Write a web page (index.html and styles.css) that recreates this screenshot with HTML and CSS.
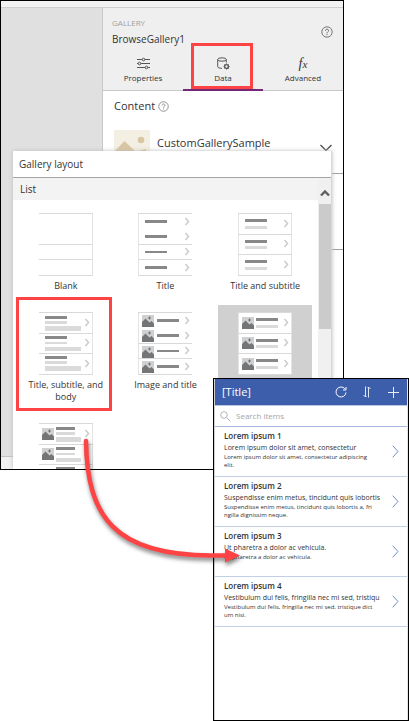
FILE: index.html
```html
<!DOCTYPE html>
<html lang="en">
<head>
<meta charset="utf-8">
<meta name="viewport" content="width=device-width, initial-scale=1">
<title>BrowseGallery1</title>
<link rel="stylesheet" href="styles.css">
</head>
<body>
<svg class="defs" aria-hidden="true">
  <defs>
    <path id="chev" d="M0.500 0 L3.500 3.500 L0.500 7" fill="none" stroke="#cdcdcd" stroke-width="1.600"/>
    <g id="pic">
      <rect width="12" height="12" fill="#cfd0d1"/>
      <path d="M0 12V7L3.500 3.500L7.500 7.500L9.500 6L12 8.500V12Z" fill="#737577"/>
      <path d="M7.500 1.500V4.500M6 3H9" stroke="#737577" stroke-width="1"/>
    </g>
    <path id="rows3" d="M0 .5H54M0 21.500H54M0 41.500H54M0 62.500H54" stroke="#d9d9d9" fill="none"/>
    <path id="rows4" d="M0 .5H54M0 31.500H54M0 46.500H54M0 62.500H54" stroke="#d9d9d9" fill="none"/>
    <g id="chev3"><use href="#chev" x="46" y="7"/><use href="#chev" x="46" y="27"/><use href="#chev" x="46" y="48"/></g>
    <g id="chev4"><use href="#chev" x="47" y="5"/><use href="#chev" x="47" y="20"/><use href="#chev" x="47" y="35"/><use href="#chev" x="47" y="51"/></g>
  </defs>
</svg>
<div class="page">
  <div class="studio">
    <div class="ribbon"></div>
    <div class="workspace">
      <div class="canvas"><div class="canvas-foot"></div></div>
      <section class="panel">
        <header class="panel-head">
          <div>
            <div class="kind">GALLERY</div>
            <div class="name">BrowseGallery1</div>
          </div>
          <button class="icon-btn" aria-label="Help"><svg width="12" height="12" viewBox="0 0 12 12" fill="none" stroke="#6a6a6a"><circle cx="6" cy="6" r="5.200" stroke-width=".9"/><path d="M4.400 4.800C4.400 2.700 7.600 2.700 7.600 4.700C7.600 5.800 6 5.900 6 7.300M6 8.200V9.200"/></svg></button>
        </header>
        <nav class="tabs">
          <button class="tab"><svg width="13" height="13" viewBox="0 0 13 13" fill="#efefef" stroke="#555"><path d="M0 2.500H13M0 6.500H13M0 10.500H13"/><circle cx="6.500" cy="2.500" r="1.300"/><circle cx="2.500" cy="6.500" r="1.300"/><circle cx="9.500" cy="10.500" r="1.300"/></svg>Properties</button>
          <button class="tab active"><svg width="13" height="13" viewBox="0 0 13 13" fill="none" stroke="#555"><ellipse cx="5" cy="2.500" rx="4.300" ry="1.700"/><path d="M.7 2.500V9.500C.7 10.800 2.500 11.300 5 11.300M9.300 2.500V5.500"/><circle cx="9.500" cy="9.500" r="1.900" stroke-width="1.400"/><path stroke-width=".8" d="M9.500 6.300V7.500M9.500 11.500V12.700M6.500 9.500H7.500M11.500 9.500H12.700M7.300 7.300L8.100 8.100M11.700 7.300L10.900 8.100M7.300 11.700L8.100 10.900M11.700 11.700L10.900 10.900"/></svg>Data<span class="callout tab-callout"></span></button>
          <button class="tab"><span class="fx"><i>f</i><i class="fx-x">x</i></span>Advanced</button>
        </nav>
        <div class="panel-body">
          <div class="content-label">Content <svg width="11" height="11" viewBox="0 0 12 12" fill="none" stroke="#8a8a8a"><circle cx="6" cy="6" r="5.200"/><path d="M4.400 4.800C4.400 2.700 7.600 2.700 7.600 4.700C7.600 5.800 6 5.900 6 7.300M6 8.200V9.200"/></svg></div>
          <div class="source">
            <svg width="36" height="36" viewBox="0 0 36 36"><rect width="36" height="36" fill="#f4efe3"/><path d="M0 22L10.500 11L22 22L31 19L36 24V36H0Z" fill="#d9c7a3"/><circle cx="27" cy="10" r="3.300" fill="#d9c7a3"/></svg>
            <span class="source-name">CustomGallerySample</span>
            <button class="icon-btn" aria-label="Expand"><svg width="12" height="8" viewBox="0 0 12 8" fill="none" stroke="#444" stroke-width="1.200"><path d="M.5 1L6 6.500L11.500 1"/></svg></button>
          </div>
          <div class="field"></div>
        </div>
      </section>
    </div>

    <section class="popup">
      <h2 class="popup-title">Gallery layout</h2>
      <div class="popup-body">
        <div class="popup-main">
          <div class="group">List</div>
          <div class="layouts">
            <button class="layout"><svg width="54" height="63" viewBox="0 0 54 63"><path d="M53.500 0V63" stroke="#e4e4e4"/><use href="#rows4"/></svg>Blank</button>
            <button class="layout"><svg width="54" height="63" viewBox="0 0 54 63"><path d="M.5 0V63" stroke="#e4e4e4"/><use href="#rows4"/><path d="M7 8.500H29M7 23.500H29M7 54.500H29" stroke="#888" stroke-width="3"/><path d="M7 39H29" stroke="#888" stroke-width="2"/><use href="#chev4"/></svg>Title</button>
            <button class="layout"><svg width="54" height="63" viewBox="0 0 54 63"><path d="M.5 0V63M53.500 0V63" stroke="#e4e4e4"/><use href="#rows3"/><path d="M7 7.500H29M7 28.500H29M7 48.500H29" stroke="#888" stroke-width="3"/><path d="M7 14.500H29M7 34.500H29M7 55.500H29" stroke="#dadada" stroke-width="3"/><use href="#chev3"/></svg>Title and subtitle</button>
            <button class="layout"><svg width="54" height="63" viewBox="0 0 54 63"><path d="M53.500 0V63" stroke="#e4e4e4"/><use href="#rows3"/><path d="M6 5.500H28M6 25.500H28M6 45.500H28" stroke="#888" stroke-width="3"/><path d="M6 10.500H28M6 50.500H28" stroke="#dadada" stroke-width="3"/><path d="M6 31H28" stroke="#dadada" stroke-width="2"/><path d="M6 16.500H42M6 56.500H42" stroke="#dadada" stroke-width="5"/><path d="M6 37H42" stroke="#dadada" stroke-width="4"/><use href="#chev3"/></svg>Title, subtitle, and body<span class="callout layout-callout"></span></button>
            <button class="layout"><svg width="54" height="63" viewBox="0 0 54 63"><path d="M.5 0V63" stroke="#e4e4e4"/><use href="#rows4"/><use href="#pic" x="4" y="3"/><use href="#pic" x="4" y="18"/><use href="#pic" x="4" y="34"/><use href="#pic" x="4" y="49"/><path d="M19 8.500H41M19 23.500H41M19 54.500H41" stroke="#888" stroke-width="3"/><path d="M19 39H41" stroke="#888" stroke-width="2"/><use href="#chev4"/></svg>Image and title</button>
            <button class="layout selected" aria-pressed="true"><svg width="54" height="63" viewBox="0 0 54 63"><rect width="54" height="63" fill="#fff"/><path d="M.5 0V63M53.500 0V63" stroke="#e4e4e4"/><use href="#rows3"/><use href="#pic" x="4" y="5"/><use href="#pic" x="4" y="25"/><use href="#pic" x="4" y="46"/><path d="M18 7.500H40M18 28.500H40M18 48.500H40" stroke="#888" stroke-width="3"/><path d="M18 14.500H40M18 34.500H40M18 55.500H40" stroke="#dadada" stroke-width="3"/><use href="#chev3"/></svg></button>
            <button class="layout"><svg width="54" height="63" viewBox="0 0 54 63"><path d="M53.500 0V63" stroke="#e4e4e4"/><use href="#rows3"/><use href="#pic" x="3" y="5"/><use href="#pic" x="3" y="25"/><path d="M17 5.500H36M17 25.500H36M17 45.500H36" stroke="#888" stroke-width="3"/><path d="M17 10.500H36" stroke="#dadada" stroke-width="3"/><path d="M17 31H36" stroke="#dadada" stroke-width="2"/><path d="M17 16.500H42" stroke="#dadada" stroke-width="5"/><path d="M17 37H42" stroke="#dadada" stroke-width="4"/><use href="#chev" x="46" y="7"/></svg></button>
          </div>
        </div>
        <div class="scroll">
          <svg width="12" height="26" viewBox="0 0 12 26"><path d="M2 17.500L6 13.500L10 17.500" fill="none" stroke="#606060" stroke-width="2.400"/></svg>
          <div class="scroll-thumb"></div>
        </div>
      </div>
    </section>
  </div>

  <main class="phone">
    <header class="app-bar">
      <h1>[Title]</h1>
      <button class="icon-btn" aria-label="Refresh"><svg width="12" height="12" viewBox="0 0 12 12" fill="none" stroke="#fff"><path d="M11 6.500A5 5 0 1 1 9.800 2.700M11 1V4H8"/></svg></button>
      <button class="icon-btn" aria-label="Sort"><svg width="12" height="12" viewBox="0 0 12 12" fill="none" stroke="#dfe6f5"><path d="M4.500 .5V11M2.500 9L4.500 11L5.500 10M7.500 11.500V1M6.500 2L7.500 1L9.500 3"/></svg></button>
      <button class="icon-btn" aria-label="Add"><svg width="12" height="12" viewBox="0 0 12 12" fill="none" stroke="#e8edf8"><path d="M6.500 1V12M1 6.500H12"/></svg></button>
    </header>
    <label class="search">
      <svg width="11" height="11" viewBox="0 0 11 11" fill="none" stroke="#b5b5b5"><circle cx="4" cy="4" r="3.300"/><path d="M6.500 6.500L10.500 10.500"/></svg>
      <input type="text" placeholder="Search items" aria-label="Search items">
    </label>
    <ul class="items">
      <li><div class="text"><h3>Lorem ipsum 1</h3><p class="sub">Lorem ipsum dolor sit amet, consectetur</p><p class="body">Lorem ipsum dolor sit amet, consectetur adipiscing<br>elit.</p></div><svg class="next" width="7" height="13" viewBox="0 0 7 13"><path d="M.7 .7L6 6.500L.7 12.300"/></svg></li>
      <li><div class="text"><h3>Lorem ipsum 2</h3><p class="sub">Suspendisse enim metus, tincidunt quis lobortis</p><p class="body">Suspendisse enim metus, tincidunt quis lobortis a, fri<br>ngilla dignissim neque.</p></div><svg class="next" width="7" height="13" viewBox="0 0 7 13"><path d="M.7 .7L6 6.500L.7 12.300"/></svg></li>
      <li><div class="text"><h3>Lorem ipsum 3</h3><p class="sub">Ut pharetra a dolor ac vehicula.</p><p class="body">Ut pharetra a dolor ac vehicula.</p></div><svg class="next" width="7" height="13" viewBox="0 0 7 13"><path d="M.7 .7L6 6.500L.7 12.300"/></svg></li>
      <li><div class="text"><h3>Lorem ipsum 4</h3><p class="sub">Vestibulum dui felis, fringilla nec mi sed, tristiqu</p><p class="body">Vestibulum dui felis, fringilla nec mi sed, tristique dict<br>um nisi.</p></div><svg class="next" width="7" height="13" viewBox="0 0 7 13"><path d="M.7 .7L6 6.500L.7 12.300"/></svg></li>
    </ul>
  </main>

  <svg class="arrow" width="180" height="150" viewBox="70 430 180 150" aria-hidden="true"><path d="M86 441C87 515 113 556 213 555.500H226" fill="none" stroke="#fd4343" stroke-width="4.500" stroke-linecap="round"/><path d="M225 548.500L240 555.500L225 562.500Z" fill="#fd4343"/></svg>
</div>
</body>
</html>
```
FILE: styles.css
```css
* { box-sizing: border-box; }
body { margin: 0; background: #fff; color: #333; font-family: "Open Sans", "Noto Sans", sans-serif; }
h1, h2, h3, p, ul { margin: 0; padding: 0; font-weight: 400; }
button { margin: 0; padding: 0; border: 0; background: none; color: inherit; font: inherit; }
svg { display: block; flex: none; }
.defs { position: absolute; width: 0; height: 0; }
.page { position: relative; min-height: 100vh; overflow: hidden; }
.icon-btn { display: flex; }

.studio { position: relative; display: flex; flex-direction: column; height: calc(100vh - 251px); margin-right: 65px; border: 1px solid #000; overflow: hidden; }
.ribbon { height: 7px; background: #f3f2f3; border-bottom: 1px solid #cfcfcf; }
.workspace { display: flex; flex: 1; }
.canvas { flex: 1; display: flex; align-items: flex-end; background: #e0e0e0; border-right: 1px solid #c8c8c8; }
.canvas-foot { flex: 1; height: 13px; background: #f1f1f1; border-top: 1px solid #c4c4c4; }
.panel { width: 240px; background: #fff; }
.panel-head { display: flex; justify-content: space-between; align-items: center; height: 42px; padding: 6px 10px 0 9px; background: #efefef; }
.kind { font-size: 8px; line-height: 16px; color: #a0a0a0; }
.name { font-size: 10px; line-height: 16px; padding-bottom: 2px; }
.tabs { display: flex; height: 41px; background: #efefef; border-bottom: 1px solid #c9c9c9; }
.tab { position: relative; flex: 1; display: flex; flex-direction: column; align-items: center; gap: 2px; padding-top: 7px; font-size: 8px; line-height: 12px; height: 41px; }
.tab.active { border-bottom: 2px solid #742774; }
.fx { height: 13px; font: 14px/13px "Liberation Serif", serif; }
.fx-x { font-size: 11px; }
.callout { position: absolute; border: 3px solid #fd4343; pointer-events: none; }
.tab-callout { inset: -7px 10px 0 8px; }
.panel-body { padding: 7px 11px; }
.content-label { display: flex; align-items: center; gap: 3px; font-size: 11px; line-height: 16px; }
.source { display: flex; align-items: center; gap: 7px; margin-top: 16px; }
.source-name { flex: 1; align-self: flex-start; font-size: 11px; line-height: 26px; }
.field { height: 77px; margin: 7px -11px 0; border-top: 1px solid #a0a0a0; border-bottom: 1px solid #a0a0a0; }

.popup { position: absolute; inset: 150px 11px 0 12px; display: flex; flex-direction: column; background: #fff; border-right: 1px solid #d8d8d8; box-shadow: 0 0 4px #bbb; }
.popup-title { height: 27px; padding-left: 6px; border-bottom: 1px solid #a5a5a5; font-size: 10px; line-height: 27px; }
.popup-body { flex: 1; display: flex; min-height: 0; }
.popup-main { flex: 1; overflow: hidden; }
.group { height: 22px; padding-left: 7px; background: #f3f3f3; font-size: 10px; line-height: 22px; }
.layouts { display: grid; grid-template-columns: repeat(3, 1fr); gap: 13px 6px; padding: 6px; }
.layout { position: relative; display: flex; flex-direction: column; align-items: center; gap: 4px; padding: 7px 8px 0; font-size: 9px; line-height: 12px; }
.layout.selected { background: #d0d0d0; }
.layout-callout { inset: -8px 1px -8px -3px; }
.scroll { width: 13px; padding-left: 1px; background: #f0f0f0; }
.scroll-thumb { height: 125px; background: #cbcbcb; }

.phone { position: absolute; inset: 378px 0 0 213px; padding: 0 1px; background: #fff; border: 1px solid #000; box-shadow: inset 1px 0 #d0d0d0, inset -1px 0 #e4e4e4; }
.app-bar { display: flex; align-items: center; gap: 14px; height: 27px; padding: 0 8px 0 7px; background: #3d5eab; border-bottom: 1px solid #b9c6e2; color: #fff; }
.app-bar h1 { flex: 1; font-size: 11px; line-height: 26px; }
.search { display: flex; align-items: center; gap: 5px; height: 21px; padding: 0 5px; border-bottom: 1px solid #a6b9de; }
.search input { flex: 1; min-width: 0; padding: 0; border: 0; outline: 0; background: none; font: 8px/16px "Open Sans", sans-serif; }
.search input::placeholder { color: #a5a5a5; }
.items { list-style: none; }
.items li { display: flex; align-items: center; height: 50px; padding: 0 8px 0 9px; border-bottom: 1px solid #c3cfe6; }
.text { flex: 1; min-width: 0; align-self: flex-start; padding-top: 3px; white-space: nowrap; }
.text h3 { font-size: 8px; line-height: 12px; font-weight: 600; }
.sub { font-size: 7px; line-height: 11px; }
.body { font-size: 6px; line-height: 8px; }
.next { fill: none; stroke: #6c8bc9; }
.arrow { position: absolute; left: 70px; top: 430px; filter: drop-shadow(1px 3px 2px rgba(0, 0, 0, .5)); }
```
